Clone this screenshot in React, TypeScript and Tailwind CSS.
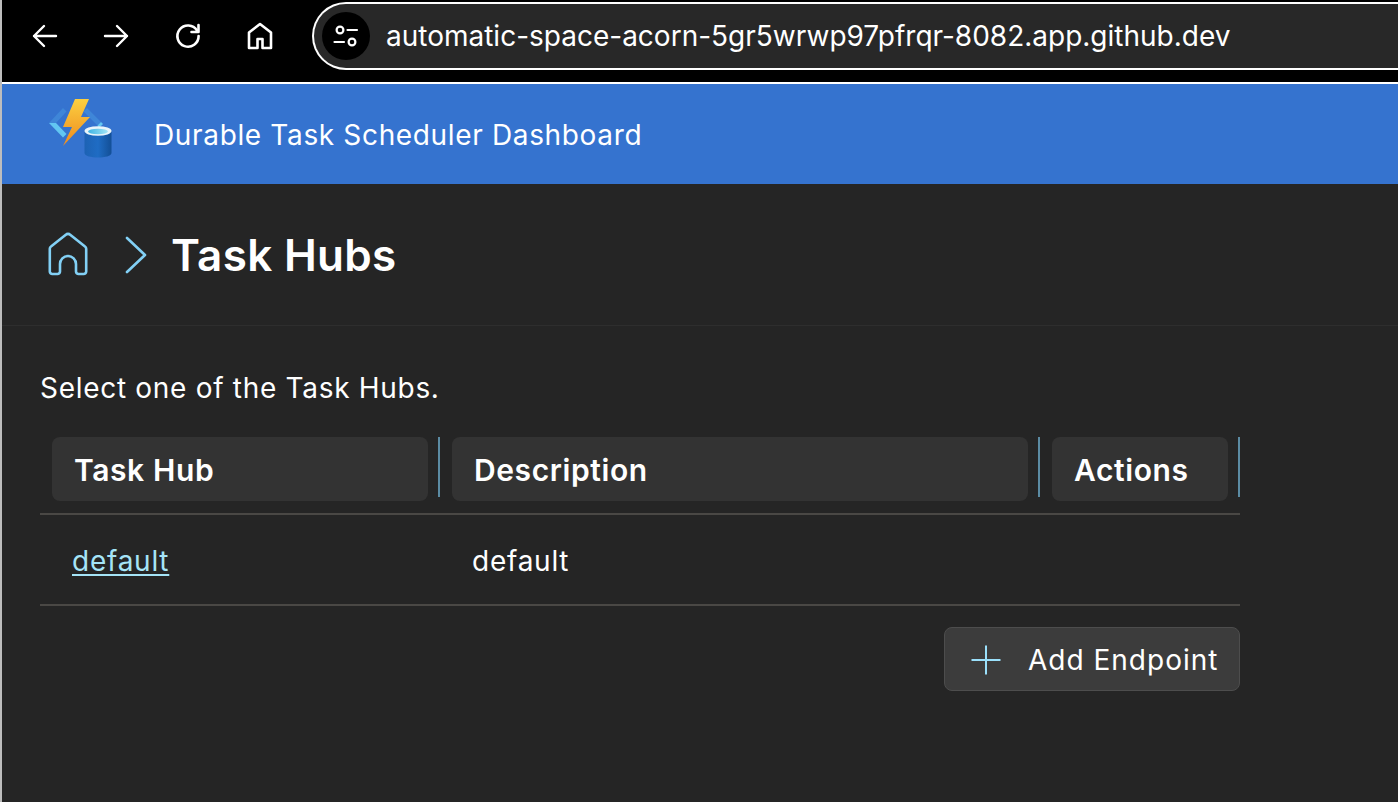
import React from "react";

const font = { fontFamily: "Inter, 'Noto Sans', sans-serif" };

function Logo() {
  return (
    <svg width="66" height="64" viewBox="0 0 66 64" className="mb-3 shrink-0">
      <defs>
        <linearGradient id="bolt" x1="0" y1="0" x2="0" y2="1">
          <stop offset="0" stopColor="#fcd040" />
          <stop offset="1" stopColor="#ee8a1f" />
        </linearGradient>
        <linearGradient id="can" x1="0" y1="0" x2="1" y2="0">
          <stop offset="0" stopColor="#1d62b4" />
          <stop offset="0.5" stopColor="#1f6cc4" />
          <stop offset="1" stopColor="#134f96" />
        </linearGradient>
        <linearGradient id="top" x1="0" y1="0" x2="1" y2="0">
          <stop offset="0" stopColor="#3fb4e4" />
          <stop offset="1" stopColor="#a4e6f6" />
        </linearGradient>
      </defs>
      <path d="M1 27 L15 12 L18.500 15.500 L8 27 Z" fill="#3f86d8" />
      <path d="M1 27 L15 41.500 L18.500 38 L8 27 Z" fill="#62c6f2" />
      <path d="M39 12 L53 26 L49.500 29.500 L35.500 15.500 Z" fill="#3f86d8" />
      <path d="M49.500 29.500 L53 26 L55 28 L51 32 Z" fill="#62c6f2" />
      <path d="M27 3 L41 3 L33 21 L42 21 L15 50 L24 31 L15 31 Z" fill="url(#bolt)" />
      <path d="M36.500 35 V57 C36.500 63 63.500 63 63.500 57 V35 Z" fill="url(#can)" />
      <ellipse cx="50" cy="35" rx="13.500" ry="4.800" fill="#e8f4fa" />
      <ellipse cx="50" cy="35.500" rx="10" ry="2.800" fill="url(#top)" />
    </svg>
  );
}

function HeaderCell({ label, w }: { label: string; w: string }) {
  return (
    <div className={`flex items-start pl-3 ${w}`}>
      <div className="flex h-16 min-w-0 flex-1 items-center rounded-lg bg-[#333333] pl-[22px] pt-[2px] text-[30px] font-semibold tracking-[0.6px] text-white">
        {label}
      </div>
      <div className="ml-[10px] h-[60px] w-[2px] shrink-0 bg-[#5b8ba3]" />
    </div>
  );
}

export default function App() {
  return (
    <div className="flex h-[802px] w-[1398px] flex-col overflow-hidden border-l-2 border-[#bdbdbd] bg-[#252525]" style={font}>
      <div className="flex h-[84px] shrink-0 items-start border-b-2 border-white bg-black">
        <div className="flex h-[72px] w-[310px] shrink-0 items-center text-white">
          <svg width="28" height="28" viewBox="0 0 28 28" fill="none" stroke="currentColor" strokeWidth="2.4" strokeLinecap="round" strokeLinejoin="round" className="ml-[29px]">
            <path d="M25 14H3M13 4L3 14l10 10" />
          </svg>
          <svg width="28" height="28" viewBox="0 0 28 28" fill="none" stroke="currentColor" strokeWidth="2.4" strokeLinecap="round" strokeLinejoin="round" className="ml-[43px]">
            <path d="M3 14h22M15 4l10 10-10 10" />
          </svg>
          <svg width="28" height="28" viewBox="0 0 28 28" fill="none" stroke="currentColor" strokeWidth="2.6" strokeLinecap="round" strokeLinejoin="round" className="ml-[44px]">
            <path d="M23 8.500A10.600 10.600 0 1 0 24.600 14" />
            <path d="M24.500 3v7h-7" />
          </svg>
          <svg width="30" height="30" viewBox="0 0 30 30" fill="none" stroke="currentColor" strokeWidth="2.6" strokeLinejoin="round" className="ml-[43px]">
            <path d="M15 3L4 11.500V27h8.500v-9h5v9H26V11.500Z" />
          </svg>
        </div>
        <div className="mt-[2px] flex h-[68px] flex-1 items-center rounded-l-[34px] border-y-2 border-l-2 border-white bg-[#282828] pl-2">
          <div className="flex h-12 w-12 shrink-0 items-center justify-center rounded-full bg-black text-white">
            <svg width="28" height="28" viewBox="0 0 28 28" fill="none" stroke="currentColor" strokeWidth="2.2" strokeLinecap="round">
              <circle cx="8" cy="8" r="3.400" />
              <path d="M15.500 8H25M2.500 20H12" />
              <circle cx="20" cy="20" r="3.400" />
            </svg>
          </div>
          <span className="ml-4 whitespace-nowrap text-[28px] text-white">automatic-space-acorn-5gr5wrwp97pfrqr-8082.app.github.dev</span>
        </div>
      </div>

      <header className="flex h-[100px] shrink-0 items-center bg-[#3573cf] pl-[46px] text-white">
        <Logo />
        <span className="ml-[40px] pt-[2px] text-[28px] tracking-[0.65px]">Durable Task Scheduler Dashboard</span>
      </header>

      <div className="flex h-[142px] shrink-0 items-center border-b border-[#2e2e2e] pl-[46px]">
        <svg width="40" height="44" viewBox="0 0 40 44" fill="none" stroke="#82d0f5" strokeWidth="2.6" strokeLinejoin="round" className="mb-[1px]">
          <path d="M17.800 2.800a3 3 0 0 1 4.400 0L37 14.500a3 3 0 0 1 1.200 2.500V39.500a2.500 2.500 0 0 1-2.500 2.500H30.500a2.500 2.500 0 0 1-2.500-2.500V32a8 8 0 0 0-16 0V39.500a2.500 2.500 0 0 1-2.500 2.500H4.300a2.500 2.500 0 0 1-2.500-2.500V17a3 3 0 0 1 1.200-2.500Z" />
        </svg>
        <svg width="24" height="40" viewBox="0 0 24 40" fill="none" stroke="#82d0f5" strokeWidth="2.6" strokeLinecap="round" strokeLinejoin="round" className="ml-[36px]">
          <path d="M3 3l18 17L3 37" />
        </svg>
        <h1 className="ml-[23px] text-[44px] font-semibold tracking-[0.3px] text-white">Task Hubs</h1>
      </div>

      <main className="pl-[38px] pt-[44px]">
        <p className="text-[28px] leading-[36px] tracking-[0.7px] text-white">Select one of the Task Hubs.</p>
        <div className="mt-[31px] w-[1200px]">
          <div className="flex h-[78px] border-b-2 border-[#4a4845]">
            <HeaderCell label="Task Hub" w="w-[400px]" />
            <HeaderCell label="Description" w="w-[600px]" />
            <HeaderCell label="Actions" w="w-[200px]" />
          </div>
          <div className="flex h-[91px] items-center border-b-2 border-[#4a4845] pt-[2px] text-[28px] tracking-[0.75px] text-white">
            <a className="ml-8 w-[368px] text-[#a5e4f7] underline underline-offset-[3px] decoration-2">default</a>
            <span className="ml-8">default</span>
          </div>
          <div className="mt-[21px] flex justify-end">
            <button className="flex h-16 w-[296px] items-center rounded-lg border border-[#4d4d4d] bg-[#3c3c3c] pl-[25px] pt-[1px] text-[28px] tracking-[1px] text-white">
              <svg width="32" height="32" viewBox="0 0 32 32" fill="none" stroke="#9be0fb" strokeWidth="2">
                <path d="M16 1.500v29M1.500 16h29" />
              </svg>
              <span className="ml-[26px]">Add Endpoint</span>
            </button>
          </div>
        </div>
      </main>
    </div>
  );
}
